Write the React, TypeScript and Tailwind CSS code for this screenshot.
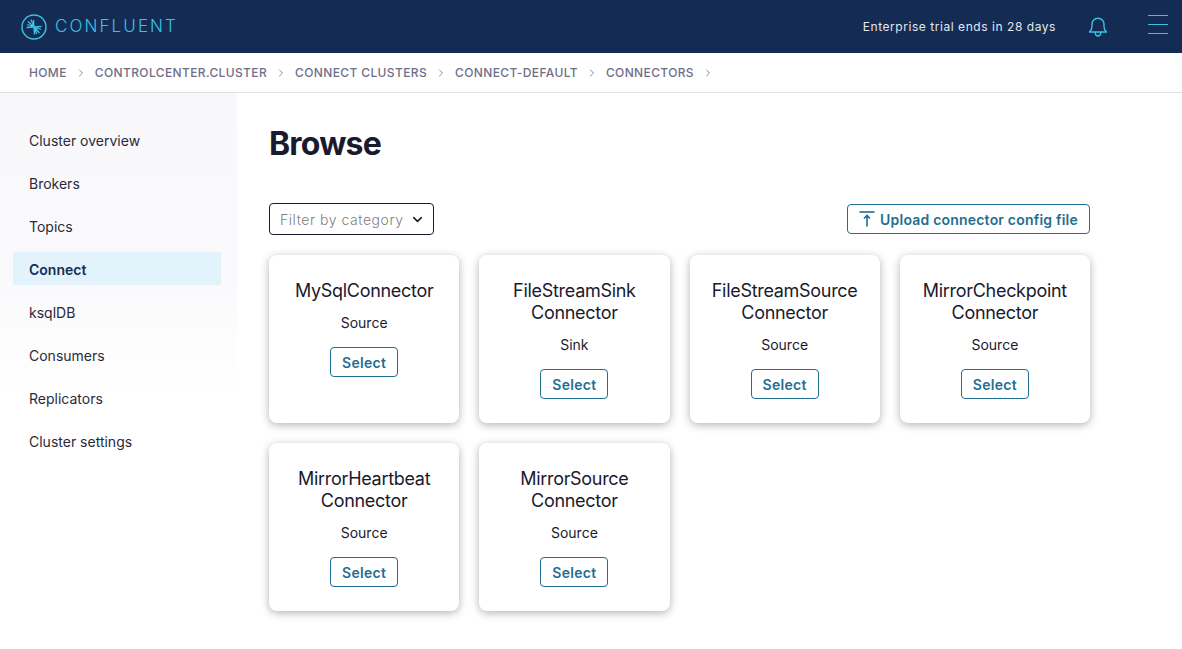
import React from 'react';
import { ChevronRight, ChevronDown } from 'lucide-react';

const crumbs = ['HOME', 'CONTROLCENTER.CLUSTER', 'CONNECT CLUSTERS', 'CONNECT-DEFAULT', 'CONNECTORS'];

const navItems = ['Cluster overview', 'Brokers', 'Topics', 'Connect', 'ksqlDB', 'Consumers', 'Replicators', 'Cluster settings'];

const connectors = [
  { title: ['MySqlConnector'], kind: 'Source' },
  { title: ['FileStreamSink', 'Connector'], kind: 'Sink' },
  { title: ['FileStreamSource', 'Connector'], kind: 'Source' },
  { title: ['MirrorCheckpoint', 'Connector'], kind: 'Source' },
  { title: ['MirrorHeartbeat', 'Connector'], kind: 'Source' },
  { title: ['MirrorSource', 'Connector'], kind: 'Source' },
];

const Logo = () => (
  <svg width="26" height="26" viewBox="0 0 26 26" fill="none" stroke="#3cc0e4" strokeWidth="1.3">
    <circle cx="13" cy="13" r="12" strokeWidth="1.4" />
    <path d="M13 13 L7 7.5 M13 13 L10 5.5 M13 13 L12.5 6 M13 13 L6 10.5 M13 13 L5.5 13.5" />
    <path d="M13 13 L20.5 12.5 M13 13 L20 15.5 M13 13 L18.5 19 M13 13 L15.8 20 M13 13 L13.5 20.5" />
  </svg>
);

const Bell = () => (
  <svg width="20" height="20" viewBox="0 0 20 20" fill="none" stroke="#3cc0e4" strokeWidth="1.4" strokeLinejoin="round">
    <path d="M1.5 15 C3.5 13.5 4 12 4 9.5 V7.5 C4 4 6.5 1.2 10 1.2 C13.5 1.2 16 4 16 7.5 V9.5 C16 12 16.5 13.5 18.5 15 Z" />
    <path d="M7.2 15 C7.2 18 8.5 19 10 19 C11.5 19 12.8 18 12.8 15" />
  </svg>
);

const UploadIcon = () => (
  <svg width="16" height="16" viewBox="0 0 16 16" fill="none" stroke="#1f6e93" strokeWidth="1.6">
    <path d="M0.5 1 H15.5" />
    <path d="M8 15.5 V4.5 M5 7.5 L8 4.5 L11 7.5" />
  </svg>
);

const ConnectorCard = ({ title, kind }: { title: string[]; kind: string }) => (
  <div className="h-[168px] rounded-lg bg-white pt-[25px] text-center shadow-[0_2px_8px_rgba(0,0,0,0.3)]">
    <h3 className="text-[18px] leading-[22px] tracking-[-0.3px] text-[#1a1a2e]">
      {title.map((line) => (
        <div key={line}>{line}</div>
      ))}
    </h3>
    <div className="mt-[10px] text-[14px] leading-[22px] text-[#1a1a2e]">{kind}</div>
    <button className="mt-[13px] h-[30px] w-[68px] rounded border border-[#1f6e93] pt-[2px] text-[14px] leading-none font-semibold tracking-[0.3px] text-[#1f6e93]">
      Select
    </button>
  </div>
);

export default function App() {
  return (
    <div className="flex h-[649px] flex-col overflow-hidden bg-white font-['Inter',sans-serif]">
      <header className="flex h-[53px] shrink-0 items-center bg-[#142c54] pr-[14px] pl-[21px]">
        <Logo />
        <span className="ml-[8px] text-[17px] font-light tracking-[2.1px] text-[#3cc0e4]">CONFLUENT</span>
        <span className="ml-auto text-[12px] tracking-[0.55px] text-[#e4e7ec]">Enterprise trial ends in 28 days</span>
        <span className="mr-[40px] ml-[32px] flex">
          <Bell />
        </span>
        <div className="mb-[4px] flex w-[20px] flex-col gap-[7.5px]">
          <div className="h-[1.5px] bg-[#3cc0e4]" />
          <div className="h-[1.5px] bg-[#3cc0e4]" />
          <div className="h-[1.5px] bg-[#3cc0e4]" />
        </div>
      </header>

      <nav className="flex h-[40px] shrink-0 items-center border-b border-[#e2e2e6] pl-[29px] text-[12px] font-medium tracking-[0.37px] text-[#6e6e88]">
        {crumbs.map((crumb) => (
          <React.Fragment key={crumb}>
            <span>{crumb}</span>
            <ChevronRight size={12} className="mx-[8px] text-[#8a8a9c]" />
          </React.Fragment>
        ))}
      </nav>

      <div className="flex min-h-0 flex-1">
        <aside className="w-[237px] shrink-0 bg-gradient-to-b from-[#f8f8fb] via-[#fafafc] via-35% to-white to-55% px-[13px] pt-[30px]">
          {navItems.map((item) => (
            <div
              key={item}
              className={`mb-[10px] flex h-[33px] w-[208px] items-center pt-[2px] pl-[16px] text-[14px] ${
                item === 'Connect' ? 'bg-[#e3f3fb] font-semibold text-[#142c54]' : 'text-[#2a2a3a]'
              }`}
            >
              {item}
            </div>
          ))}
        </aside>

        <main className="flex-1 pt-[32px] pl-[32px]">
          <h1 className="text-[32px] leading-[37px] font-bold tracking-[-0.8px] text-[#1a1a2e]">Browse</h1>
          <div className="mt-[41px] flex w-[821px] items-center justify-between">
            <div className="flex h-[32px] w-[165px] items-center justify-between rounded border border-[#1a1a2e] pr-[8px] pl-[10px] text-[14px] font-light tracking-[0.55px] text-[#808080]">
              Filter by category
              <ChevronDown size={15} strokeWidth={2.5} className="text-[#1a1a2e]" />
            </div>
            <button className="flex h-[30px] w-[243px] items-center justify-center gap-[5px] rounded border border-[#1f6e93] text-[14px] font-semibold tracking-[0.2px] text-[#1f6e93]">
              <UploadIcon />
              Upload connector config file
            </button>
          </div>
          <div className="mt-[20px] grid w-[821px] grid-cols-4 gap-5">
            {connectors.map((c) => (
              <ConnectorCard key={c.title[0]} title={c.title} kind={c.kind} />
            ))}
          </div>
        </main>
      </div>
    </div>
  );
}
